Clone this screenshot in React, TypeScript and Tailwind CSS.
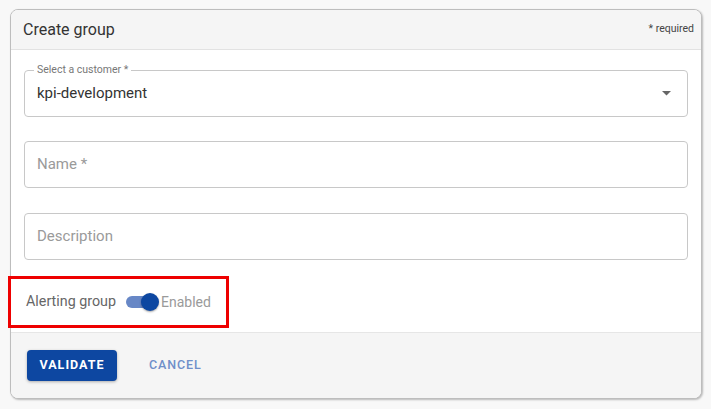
import React from "react";

export default function App() {
  return (
    <div
      className="relative w-[711px] h-[409px] bg-[#f8f8f8] pt-[9px] pl-[10px]"
      style={{ fontFamily: "Roboto, 'Liberation Sans', sans-serif" }}
    >
      <div className="w-[692px] h-[390px] rounded-[8px] border border-[#bdbdbd] shadow-[1px_1px_2px_rgba(0,0,0,0.25)] overflow-hidden flex flex-col bg-white">
        <div className="h-[40px] shrink-0 bg-[#f5f5f5] border-b border-[#e2e2e2] flex items-center justify-between pl-[12px] pr-[7px]">
          <span className="text-[16px] text-[#333] leading-none">Create group</span>
          <span className="text-[10.5px] text-[#444] leading-none">* required</span>
        </div>
        <div className="flex-1 px-[13px] pt-[20px] flex flex-col">
          <div className="relative h-[47px] border border-[#c8c8c8] rounded-[4px] flex items-center pl-[12px] pr-[15px] justify-between">
            <span className="absolute -top-[8px] left-[9px] bg-white px-[3px] text-[10.5px] text-[#777] leading-[14px]">
              Select a customer *
            </span>
            <span className="text-[15px] text-[#333]">kpi-development</span>
            <svg width="9" height="5" viewBox="0 0 9 5" className="mr-[1px]">
              <path d="M0 0 L9 0 L4.5 4.5 Z" fill="#666" />
            </svg>
          </div>
          <div className="mt-[24px] h-[47px] border border-[#c8c8c8] rounded-[4px] flex items-center pl-[12px]">
            <span className="text-[15px] text-[#9a9a9a]">Name *</span>
          </div>
          <div className="mt-[25px] h-[47px] border border-[#c8c8c8] rounded-[4px] flex items-center pl-[12px]">
            <span className="text-[15px] text-[#9a9a9a]">Description</span>
          </div>
          <div className="mt-[30px] flex items-center pl-[2px] h-[24px]">
            <span className="text-[14.3px] text-[#666]">Alerting group</span>
            <div className="relative ml-[10px] w-[32px] h-[24px] flex items-center">
              <div className="w-[30px] h-[12px] rounded-full bg-[#6787c6]" />
              <div className="absolute left-[15px] top-[3px] w-[18px] h-[18px] rounded-full bg-[#0d47a1] shadow-[0_1px_2px_rgba(0,0,0,0.35)]" />
            </div>
            <span className="ml-[3px] text-[14px] text-[#9a9a9a]">Enabled</span>
          </div>
        </div>
        <div className="h-[66px] shrink-0 bg-[#f5f5f5] border-t border-[#e6e6e6] flex items-center pl-[16px]">
          <button className="w-[90px] h-[31px] rounded-[4px] bg-[#0d47a1] text-white text-[12.5px] font-bold tracking-[1px] shadow-[0_1px_3px_rgba(0,0,0,0.3)]">
            VALIDATE
          </button>
          <button className="ml-[32px] text-[12.5px] font-medium tracking-[0.9px] text-[#6f8fc9]">
            CANCEL
          </button>
        </div>
      </div>
      <div className="absolute left-[8px] top-[276px] w-[221px] h-[52px] border-[3px] border-[#ee0000] pointer-events-none" />
    </div>
  );
}
